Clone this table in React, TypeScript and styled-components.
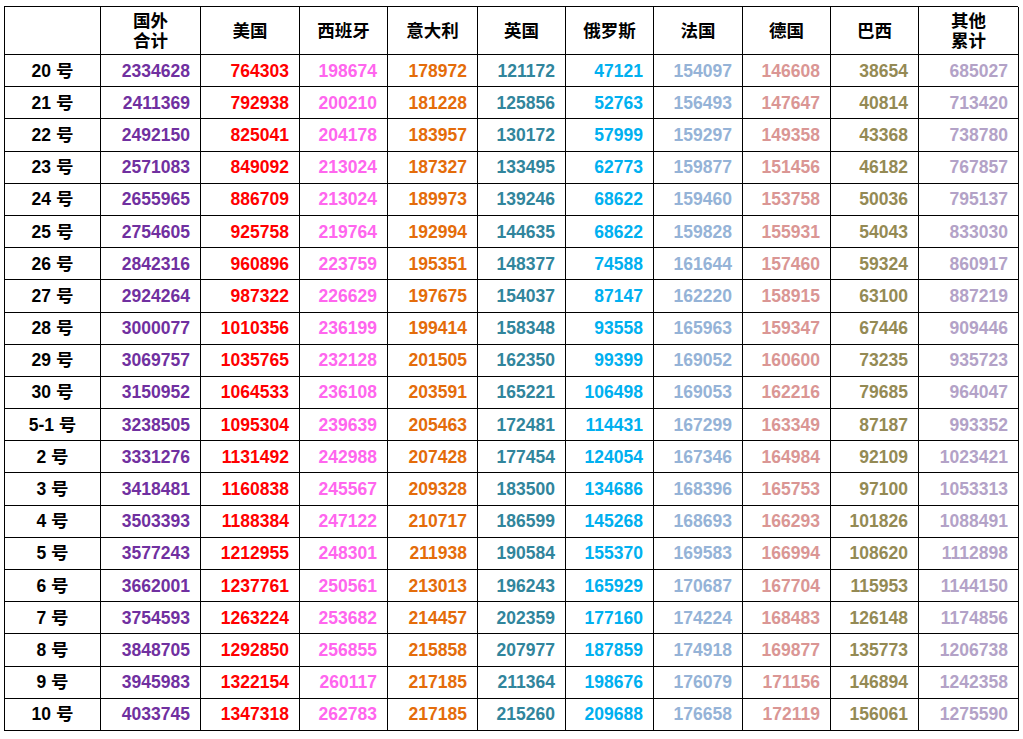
import styled, { createGlobalStyle } from 'styled-components';

const GlobalStyle = createGlobalStyle`
  html, body {
    margin: 0;
    padding: 0;
    background: #ffffff;
  }
  body {
    font-family: 'Liberation Sans', 'Noto Sans CJK SC', sans-serif;
  }
`;

const COLUMNS = [
  { title: ['国外', '合计'], color: '#7030a0' },
  { title: ['美国'], color: '#ff0000' },
  { title: ['西班牙'], color: '#ff66ee' },
  { title: ['意大利'], color: '#e46c0a' },
  { title: ['英国'], color: '#31859c' },
  { title: ['俄罗斯'], color: '#00b0f0' },
  { title: ['法国'], color: '#95b3d7' },
  { title: ['德国'], color: '#da9694' },
  { title: ['巴西'], color: '#948a54' },
  { title: ['其他', '累计'], color: '#b3a2c7' },
];

const ROWS: [string, number[]][] = [
  ['20', [2334628, 764303, 198674, 178972, 121172, 47121, 154097, 146608, 38654, 685027]],
  ['21', [2411369, 792938, 200210, 181228, 125856, 52763, 156493, 147647, 40814, 713420]],
  ['22', [2492150, 825041, 204178, 183957, 130172, 57999, 159297, 149358, 43368, 738780]],
  ['23', [2571083, 849092, 213024, 187327, 133495, 62773, 159877, 151456, 46182, 767857]],
  ['24', [2655965, 886709, 213024, 189973, 139246, 68622, 159460, 153758, 50036, 795137]],
  ['25', [2754605, 925758, 219764, 192994, 144635, 68622, 159828, 155931, 54043, 833030]],
  ['26', [2842316, 960896, 223759, 195351, 148377, 74588, 161644, 157460, 59324, 860917]],
  ['27', [2924264, 987322, 226629, 197675, 154037, 87147, 162220, 158915, 63100, 887219]],
  ['28', [3000077, 1010356, 236199, 199414, 158348, 93558, 165963, 159347, 67446, 909446]],
  ['29', [3069757, 1035765, 232128, 201505, 162350, 99399, 169052, 160600, 73235, 935723]],
  ['30', [3150952, 1064533, 236108, 203591, 165221, 106498, 169053, 162216, 79685, 964047]],
  ['5-1', [3238505, 1095304, 239639, 205463, 172481, 114431, 167299, 163349, 87187, 993352]],
  ['2', [3331276, 1131492, 242988, 207428, 177454, 124054, 167346, 164984, 92109, 1023421]],
  ['3', [3418481, 1160838, 245567, 209328, 183500, 134686, 168396, 165753, 97100, 1053313]],
  ['4', [3503393, 1188384, 247122, 210717, 186599, 145268, 168693, 166293, 101826, 1088491]],
  ['5', [3577243, 1212955, 248301, 211938, 190584, 155370, 169583, 166994, 108620, 1112898]],
  ['6', [3662001, 1237761, 250561, 213013, 196243, 165929, 170687, 167704, 115953, 1144150]],
  ['7', [3754593, 1263224, 253682, 214457, 202359, 177160, 174224, 168483, 126148, 1174856]],
  ['8', [3848705, 1292850, 256855, 215858, 207977, 187859, 174918, 169877, 135773, 1206738]],
  ['9', [3945983, 1322154, 260117, 217185, 211364, 198676, 176079, 171156, 146894, 1242358]],
  ['10', [4033745, 1347318, 262783, 217185, 215260, 209688, 176658, 172119, 156061, 1275590]],
];

const App = () => {
  return (
    <>
      <GlobalStyle />
      <Page>
        <Sheet>
          <HeaderCell />
          {COLUMNS.map((col) => (
            <HeaderCell key={col.title.join('')}>
              {col.title.map((line) => (
                <span key={line}>{line}</span>
              ))}
            </HeaderCell>
          ))}
          {ROWS.map(([day, values]) => (
            <Row key={day} day={day} values={values} />
          ))}
        </Sheet>
      </Page>
    </>
  );
};

const Row = ({ day, values }: { day: string; values: number[] }) => (
  <>
    <LabelCell>{day} 号</LabelCell>
    {values.map((v, i) => (
      <NumberCell key={i} $color={COLUMNS[i].color}>
        {v}
      </NumberCell>
    ))}
  </>
);

export default App;

const Page = styled.div`
  padding: 6px 5px 8px 4px;
`;

const Sheet = styled.div`
  display: grid;
  grid-template-columns: 96px 100px 99px 88px 90px 88px 88px 89px 88px 88px 100px;
  grid-template-rows: 48px repeat(21, 1fr);
  height: 725px;
  width: 1014px;
  box-sizing: border-box;
  border-top: 1px solid #000;
  border-left: 1px solid #000;
`;

const Cell = styled.div`
  box-sizing: border-box;
  border-right: 1px solid #000;
  border-bottom: 1px solid #000;
  font-weight: bold;
  font-size: 17.5px;
  line-height: 20px;
  display: flex;
  align-items: center;
  white-space: nowrap;
`;

const HeaderCell = styled(Cell)`
  flex-direction: column;
  justify-content: center;
  color: #000;
`;

const LabelCell = styled(Cell)`
  justify-content: center;
  color: #000;
`;

const NumberCell = styled(Cell)<{ $color: string }>`
  justify-content: flex-end;
  padding-right: 10px;
  color: ${(p) => p.$color};
`;
